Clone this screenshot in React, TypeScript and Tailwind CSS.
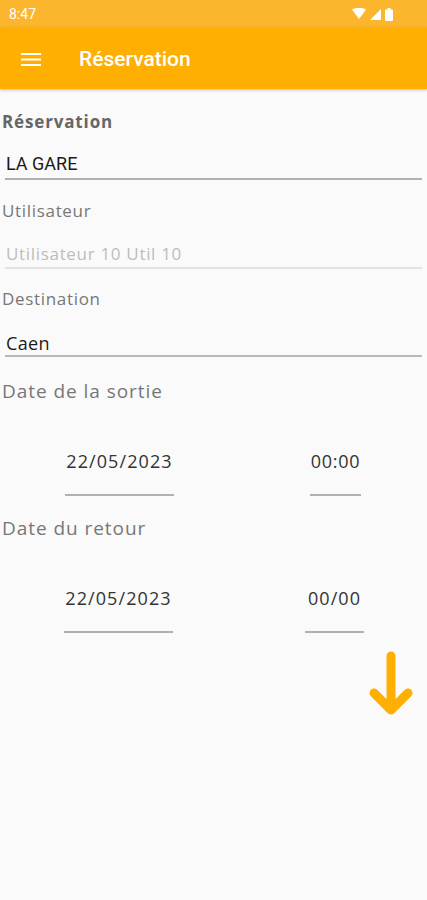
export default function App() {
  const font = { fontFamily: "'Open Sans', Lato, sans-serif" };
  return (
    <div className="flex h-[900px] w-[427px] flex-col bg-[#fafafa]" style={font}>
      {/* Status bar */}
      <div className="flex h-[28px] items-center justify-between bg-[#fbb62e] pl-[9px] pr-[34px] text-white">
        <span className="text-[14px] font-['Roboto',sans-serif]">8:47</span>
        <div className="flex items-center gap-[4px]">
          <svg width="14" height="12" viewBox="0 0 14 12">
            <path d="M0 1.5 Q7 -2 14 1.5 L7 11 Z" fill="white" />
          </svg>
          <svg width="11" height="11" viewBox="0 0 11 11">
            <path d="M11 0 V11 H0 Z" fill="white" />
          </svg>
          <svg width="8" height="13" viewBox="0 0 8 13">
            <rect x="2.5" y="0" width="3" height="2" fill="white" />
            <rect x="0" y="1.5" width="8" height="11.5" rx="1" fill="white" />
          </svg>
        </div>
      </div>

      {/* Toolbar */}
      <div className="flex h-[61px] items-center bg-[#ffaf02] shadow-[0_1px_3px_rgba(0,0,0,0.25)]">
        <svg className="ml-[21px] mt-[2px]" width="20" height="13" viewBox="0 0 20 13">
          <rect y="0" width="20" height="2" fill="white" />
          <rect y="5.5" width="20" height="2" fill="white" />
          <rect y="11" width="20" height="2" fill="white" />
        </svg>
        <span className="ml-[38px] mt-[2px] text-[21px] font-medium text-white" style={{ fontFamily: "Roboto, sans-serif" }}>
          Réservation
        </span>
      </div>

      {/* Form */}
      <div className="flex flex-col pr-[5px]">
        <div className="mt-[23px] pl-[2px] text-[17px] leading-[20px] font-bold tracking-[0.05em] text-[#666]">Réservation</div>
        <div className="ml-[5px] mt-[22px] border-b-2 border-[#b0b0b0] pb-[4px] pl-[1px] text-[18px] leading-[20px] text-[#1a1a1a]" style={{ fontFamily: "Roboto, sans-serif" }}>
          LA GARE
        </div>

        <div className="mt-[21px] pl-[2px] text-[17px] leading-[20px] tracking-[0.04em] text-[#777]">Utilisateur</div>
        <div className="ml-[5px] mt-[23px] border-b-2 border-[#e3e3e3] pb-[3px] pl-[1px] text-[17px] leading-[20px] tracking-[0.04em] text-[#bdbdbd]">
          Utilisateur 10 Util 10
        </div>

        <div className="mt-[20px] pl-[2px] text-[17px] leading-[20px] tracking-[0.04em] text-[#777]">Destination</div>
        <div className="ml-[5px] mt-[24px] border-b-2 border-[#b8b8b8] pb-[2px] pl-[1px] text-[18px] leading-[20px] tracking-[0.02em] text-[#1a1a1a]">
          Caen
        </div>

        <div className="mt-[22px] pl-[2px] text-[19px] leading-[24px] tracking-[0.05em] text-[#777]">Date de la sortie</div>
        <div className="mt-[48px] flex items-start">
          <div className="ml-[65px] w-[109px] border-b-2 border-[#b0b0b0] pb-[23px] text-center text-[18px] leading-[20px] tracking-[0.06em] text-[#333]">
            22/05/2023
          </div>
          <div className="ml-[136px] w-[51px] border-b-2 border-[#b0b0b0] pb-[23px] text-center text-[18px] leading-[20px] tracking-[0.04em] text-[#333]">
            00:00
          </div>
        </div>

        <div className="mt-[20px] pl-[2px] text-[19px] leading-[24px] tracking-[0.05em] text-[#777]">Date du retour</div>
        <div className="mt-[48px] flex items-start">
          <div className="ml-[64px] w-[109px] border-b-2 border-[#b0b0b0] pb-[23px] text-center text-[18px] leading-[20px] tracking-[0.06em] text-[#333]">
            22/05/2023
          </div>
          <div className="ml-[132px] w-[59px] border-b-2 border-[#b0b0b0] pb-[23px] text-center text-[18px] leading-[20px] tracking-[0.06em] text-[#333]">
            00/00
          </div>
        </div>

        <div className="mt-[18px] flex justify-end pr-[8px]">
          <svg width="46" height="66" viewBox="0 0 46 66">
            <path d="M23 5 V59 M6 42 L23 59 L40 42" fill="none" stroke="#ffaf02" strokeWidth="9" strokeLinecap="round" strokeLinejoin="round" />
          </svg>
        </div>
      </div>
    </div>
  );
}
